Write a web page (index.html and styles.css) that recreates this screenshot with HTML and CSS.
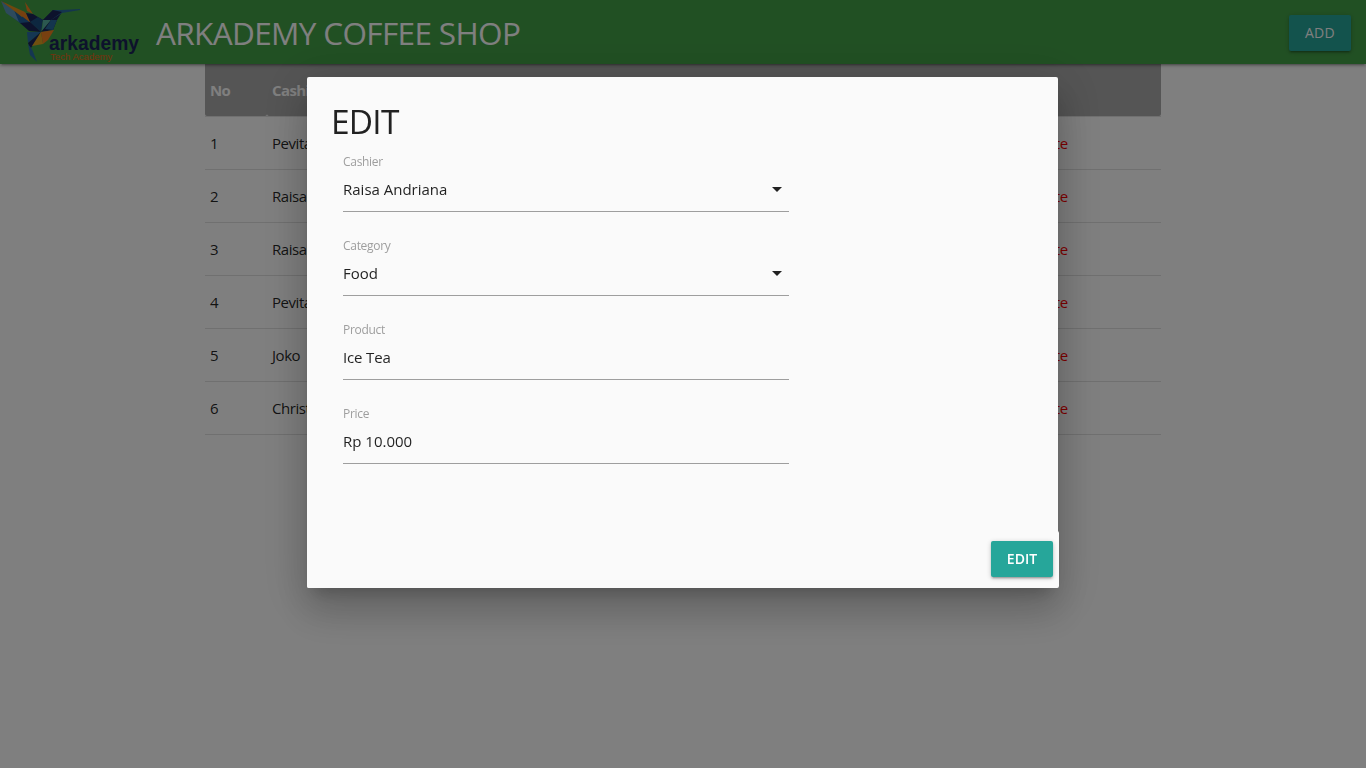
FILE: index.html
```html
<!DOCTYPE html>
<html lang="en">
<head>
<meta charset="utf-8">
<title>Arkademy Coffee Shop</title>
<link rel="stylesheet" href="styles.css">
</head>
<body>
<nav class="navbar">
  <div class="brand">
    <svg class="logo" width="142" height="64" viewBox="0 0 142 64">
      <path fill="#20609c" d="M2 1L30 22L41 32L31 28L20 23L7 13Z"/>
      <path fill="#5a94b8" d="M1 1L14 10L19 22L6 13Z"/>
      <path fill="#e0901c" d="M1 1L25 12L22 17L13 10Z"/>
      <path fill="#f08020" d="M22 11L26 13L31 23L19 14Z"/>
      <path fill="#f08020" d="M25 2L33 14L27 11Z"/>
      <path fill="#1b2458" d="M26 13L33 14L43 20L30 22Z"/>
      <path fill="#1b4f80" d="M30 22L38 17L43 20L41 32Z"/>
      <path fill="#1b2458" d="M20 23L30 22L41 32L29 31Z"/>
      <path fill="#58b0a0" d="M43 20L51 20L42 31Z"/>
      <path fill="#1b2458" d="M43 20L53 10L62 12L57 20L53 30L41 32L51 20Z"/>
      <path fill="#286b9c" d="M51 20L57 20L53 30L45 29Z"/>
      <path fill="#286b9c" d="M53 10L61 10L80 9L80 10L62 13L51 20Z"/>
      <path fill="#1b2458" d="M53 10L62 12L51 20L43 20Z"/>
      <path fill="#2a6ca4" d="M27 32L41 32L28 43Z"/>
      <path fill="#1b2458" d="M41 32L34 44L30 49L28 43Z"/>
      <path fill="#e0a020" d="M41 32L43 44L32 46Z"/>
      <path fill="#f08020" d="M41 32L54 30L48 40L43 44Z"/>
      <path fill="#2a6ca4" d="M28 44L32 49L37 62L30 55Z"/>
      <text class="logo-name" x="49" y="49.8" textLength="90" lengthAdjust="spacingAndGlyphs">arkademy</text>
      <text class="logo-sub" x="50" y="60">Tech Academy</text>
    </svg>
    <span class="brand-title">ARKADEMY COFFEE SHOP</span>
  </div>
  <button class="btn">ADD</button>
</nav>
<main class="container">
  <table class="orders">
    <thead><tr><th class="col-no">No</th><th class="col-name">Cashier</th><th class="col-action"></th></tr></thead>
    <tbody>
      <tr><td>1</td><td>Pevita</td><td class="del">Delete</td></tr>
      <tr><td>2</td><td>Raisa</td><td class="del">Delete</td></tr>
      <tr><td>3</td><td>Raisa</td><td class="del">Delete</td></tr>
      <tr><td>4</td><td>Pevita</td><td class="del">Delete</td></tr>
      <tr><td>5</td><td>Joko</td><td class="del">Delete</td></tr>
      <tr><td>6</td><td>Christ</td><td class="del">Delete</td></tr>
    </tbody>
  </table>
</main>
<div class="overlay">
  <section class="modal">
    <h4 class="modal-title">EDIT</h4>
    <form class="fields">
      <div class="field"><label class="label">Cashier</label><div class="value"><span>Raisa Andriana</span><svg class="caret" width="10" height="5" viewBox="0 0 10 5"><path d="M0 0H10L5 5Z"/></svg></div></div>
      <div class="field"><label class="label">Category</label><div class="value"><span>Food</span><svg class="caret" width="10" height="5" viewBox="0 0 10 5"><path d="M0 0H10L5 5Z"/></svg></div></div>
      <div class="field"><label class="label">Product</label><div class="value"><span class="tight">Ice Tea</span></div></div>
      <div class="field"><label class="label">Price</label><div class="value"><span>Rp 10.000</span></div></div>
    </form>
    <footer class="modal-footer"><button class="btn btn-edit" type="button">EDIT</button></footer>
  </section>
</div>
</body>
</html>
```
FILE: styles.css
```css
* { box-sizing: border-box; }
body { margin: 0; height: 768px; overflow: hidden; background: #fff; color: rgba(0,0,0,.87); font-family: "Open Sans", "Noto Sans", sans-serif; font-size: 15px; line-height: 1.5; }
.navbar { position: relative; height: 64px; display: flex; align-items: center; justify-content: space-between; padding-right: 15px; background: #43a047; box-shadow: 0 2px 2px 0 rgba(0,0,0,.14), 0 3px 1px -2px rgba(0,0,0,.12), 0 1px 5px 0 rgba(0,0,0,.2); }
.brand { display: flex; align-items: center; height: 64px; }
.logo { display: block; }
.logo-name { font: bold 19.5px "Liberation Sans", Arial, sans-serif; fill: #1b2458; }
.logo-sub { font: 9.6px/1 "Liberation Sans", Arial, sans-serif; fill: #e8641a; }
.brand-title { margin-left: 14px; color: #fff; font-size: 31.5px; line-height: 64px; letter-spacing: -.64px; white-space: nowrap; padding-top: 2px; }
.btn { width: 62px; height: 36px; margin: 2px 0 0; padding: 0; border: 0; border-radius: 2px; background: #26a69a; color: #fff; font: 14px/36px "Open Sans", sans-serif; letter-spacing: .35px; text-align: center; box-shadow: 0 2px 2px 0 rgba(0,0,0,.14), 0 3px 1px -2px rgba(0,0,0,.12), 0 1px 5px 0 rgba(0,0,0,.2); }
.container { width: 956px; margin: 0 auto; }
.orders { width: 100%; table-layout: fixed; border-collapse: collapse; }
.orders tr { height: 53px; border-bottom: 1px solid rgba(0,0,0,.12); }
.orders thead tr { height: 52px; }
.orders th { background: #aaa; color: #fff; text-align: left; border-radius: 0 0 2px 2px; letter-spacing: -.6px; }
.orders th { padding: 1px 5px 0; }
.orders td { padding: 2px 5px 0; letter-spacing: -.45px; }
.col-no { width: 62px; }
.col-name { width: 752px; }
.orders .del { color: red; letter-spacing: -.2px; }
.overlay { position: fixed; inset: 0; display: flex; align-items: flex-start; padding-left: 307px; background: rgba(0,0,0,.5); }
.modal { width: 751px; height: 511px; margin-top: 77px; display: flex; flex-direction: column; background: #fafafa; border-radius: 2px; box-shadow: 0 24px 38px 3px rgba(0,0,0,.14), 0 9px 46px 8px rgba(0,0,0,.12), 0 11px 15px -7px rgba(0,0,0,.2); }
.modal-title { margin: 25px 0 0 24px; font-size: 33.5px; line-height: 38px; font-weight: 400; letter-spacing: -.8px; }
.fields { margin: 15px 0 0 36px; width: 446px; flex: 1; }
.field { height: 84px; }
.label { display: block; height: 14px; color: #9e9e9e; font-size: 12px; line-height: 14px; letter-spacing: -.3px; }
.value { height: 43px; display: flex; align-items: center; justify-content: space-between; border-bottom: 1px solid #9e9e9e; padding: 0 7px 2px 0; }
.tight { letter-spacing: -.15px; }
.caret { display: block; fill: rgba(0,0,0,.87); }
.modal-footer { width: 752px; height: 57px; display: flex; justify-content: flex-end; padding: 10px 6px 0 0; background: #fafafa; border-radius: 0 2px 2px 2px; }
.btn-edit { margin: 0; font-weight: 600; letter-spacing: 0; }
```
